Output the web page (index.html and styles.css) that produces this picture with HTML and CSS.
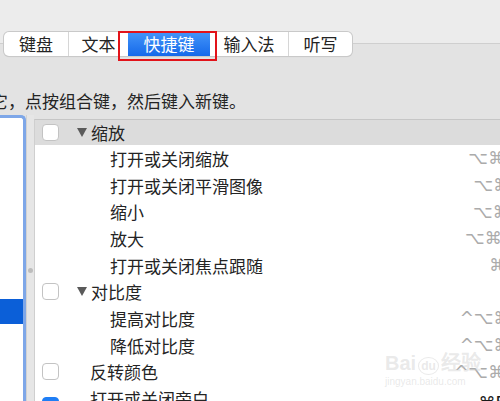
FILE: index.html
```html
<!DOCTYPE html>
<html lang="zh-CN">
<head>
<meta charset="utf-8">
<link rel="stylesheet" href="styles.css">
</head>
<body>
<div class="page">
  <div class="tabs">
    <div class="seg seg-1">键盘</div>
    <div class="seg seg-2">文本</div>
    <div class="seg seg-3 active">快捷键</div>
    <div class="seg seg-4">输入法</div>
    <div class="seg seg-5">听写</div>
  </div>
  <div class="mark"></div>
  <p class="hint">它，点按组合键，然后键入新键。</p>
  <div class="main">
    <div class="side">
      <div class="side-sel"></div>
    </div>
    <div class="gap"><span class="handle"></span></div>
    <div class="list">
      <div class="row group selected">
        <span class="cb"></span><span class="tri"></span><span class="label">缩放</span>
      </div>
      <div class="row sub"><span class="label">打开或关闭缩放</span><span class="key">⌥⌘8</span></div>
      <div class="row sub"><span class="label">打开或关闭平滑图像</span><span class="key">⌥⌘\</span></div>
      <div class="row sub"><span class="label">缩小</span><span class="key">⌥⌘-</span></div>
      <div class="row sub"><span class="label">放大</span><span class="key">⌥⌘=</span></div>
      <div class="row sub"><span class="label">打开或关闭焦点跟随</span><span class="key">⌘F</span></div>
      <div class="row group">
        <span class="cb"></span><span class="tri"></span><span class="label">对比度</span>
      </div>
      <div class="row sub"><span class="label">提高对比度</span><span class="key">^⌥⌘.</span></div>
      <div class="row sub"><span class="label">降低对比度</span><span class="key">^⌥⌘,</span></div>
      <div class="row item"><span class="cb"></span><span class="label">反转颜色</span><span class="key">^⌥⌘8</span></div>
      <div class="row item"><span class="cb checked"><svg viewBox="0 0 16 16" width="16" height="16"><path d="M4.5 8.5 L7 11 L11.5 4.5" fill="none" stroke="#fff" stroke-width="1.8" stroke-linecap="round" stroke-linejoin="round"/></svg></span><span class="label">打开或关闭旁白</span><span class="key dark">⌘F5</span></div>
    </div>
  </div>
  <div class="wm">
    <span class="wm-logo">Bai<span class="wm-du">du</span>经验</span>
    <span class="wm-url">jingyan.baidu.com</span>
  </div>
</div>
</body>
</html>
```

FILE: styles.css
```css
html, body {
  margin: 0;
  padding: 0;
}
body {
  width: 500px;
  height: 401px;
  overflow: hidden;
  font-family: "Noto Sans CJK SC", "Noto Sans", sans-serif;
  color: #242424;
  background: linear-gradient(to bottom, #ececec 0, #ececec 43px, #cfcfcf 43px, #cfcfcf 44px, #e3e3e3 44px);
}
.page {
  position: relative;
  display: flow-root;
  width: 500px;
  height: 401px;
  overflow: hidden;
}
.tabs {
  display: flex;
  margin: 32px 0 0 4px;
  height: 24px;
  width: max-content;
  border-radius: 5px;
  box-shadow: 0 0 0 1px #c9c9c9, 0 1px 1px rgba(0,0,0,0.12);
  background: #fff;
}
.seg {
  height: 24px;
  line-height: 24px;
  font-size: 17px;
  text-align: center;
  border-left: 1px solid #d6d6d6;
  box-sizing: border-box;
}
.seg-1 { width: 64px; border-left: none; border-radius: 5px 0 0 5px; }
.seg-2 { width: 60px; }
.seg-3 { width: 82px; border-left: none; }
.seg-4 { width: 78px; border-left: none; }
.seg-5 { width: 64px; border-radius: 0 5px 5px 0; }
.seg.active {
  color: #fff;
  background: linear-gradient(to bottom, #4495f9, #1569ea);
}
.mark {
  position: absolute;
  left: 118px;
  top: 31px;
  width: 95px;
  height: 26px;
  border: 2px solid #e2131a;
}
.hint {
  margin: 35px 0 0 -9px;
  font-size: 17px;
  line-height: 20px;
  height: 20px;
  white-space: nowrap;
}
.main {
  display: flex;
  margin-top: 4px;
  height: 300px;
}
.side {
  width: 23px;
  flex: none;
  background: #fff;
  border: 3px solid #7ea7e8;
  border-left: none;
  border-bottom: none;
  border-radius: 0 5px 0 0;
  padding-top: 181px;
}
.side-sel {
  height: 25px;
  background: #0b5fd8;
}
.gap {
  width: 8px;
  flex: none;
  background: #e6e6e6;
  border-left: 1px solid #d2d2d2;
  display: flex;
  justify-content: center;
  padding-top: 153px;
  box-sizing: border-box;
}
.handle {
  width: 5px;
  height: 5px;
  border-radius: 50%;
  background: #bdbdbd;
}
.list {
  margin-top: 4px;
  width: 490px;
  flex: none;
  background: #fff;
  border-top: 1px solid #c6c6c6;
  border-left: 1px solid #cfcfcf;
}
.row {
  display: flex;
  align-items: center;
  height: 26.7px;
  padding: 0 9px 0 7px;
  font-size: 17px;
  white-space: nowrap;
}
.row.selected {
  height: 25px;
  background: #dcdcdc;
}
.cb {
  width: 15px;
  height: 15px;
  flex: none;
  border: 1px solid #c3c3c3;
  border-radius: 4px;
  background: #fff;
  display: flex;
}
.cb.checked {
  background: #1f7ef5;
  border-color: #1f7ef5;
  margin-top: 14px;
}
.tri {
  width: 0;
  height: 0;
  margin-left: 18px;
  border-left: 5px solid transparent;
  border-right: 5px solid transparent;
  border-top: 9px solid #5a5a5a;
}
.group .label { margin-left: 4px; }
.sub { padding-left: 75px; }
.item .label { margin-left: 31px; }
.key {
  margin-left: auto;
  font-family: "DejaVu Sans", sans-serif;
  font-size: 17px;
  color: #ababab;
}
.key.dark { color: #1a1a1a; margin-top: 8px; }
.wm {
  position: absolute;
  left: 385px;
  top: 350px;
  display: flex;
  flex-direction: column;
  align-items: flex-start;
  color: rgba(200, 200, 200, 0.4);
  pointer-events: none;
}
.wm-logo {
  font-family: "Liberation Sans", sans-serif;
  font-size: 20px;
  font-weight: bold;
  line-height: 26px;
}
.wm-du {
  display: inline-block;
  border: 1px solid rgba(200,200,200,0.4);
  border-radius: 50%;
  font-size: 12px;
  line-height: 14px;
  padding: 1px 2px;
  margin: 0 2px;
}
.wm-url {
  font-family: "Liberation Sans", sans-serif;
  font-size: 10px;
  line-height: 12px;
}
```
